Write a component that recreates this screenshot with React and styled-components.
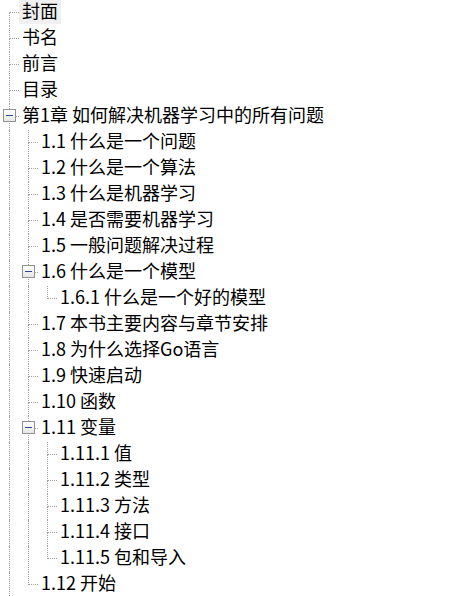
import React from "react";
import styled, { createGlobalStyle } from "styled-components";

const GlobalStyle = createGlobalStyle`
  html, body {
    margin: 0;
    padding: 0;
    background: #ffffff;
    overflow: hidden;
  }
  body {
    font-family: "Noto Sans CJK SC", "Microsoft YaHei", sans-serif;
    color: #000000;
  }
`;

const LINE = "#a0a0a0";

const Tree = styled.ul`
  list-style: none;
  margin: 0;
  padding: 0;
  height: 100vh;
  overflow: hidden;
`;

const Row = styled.li`
  display: flex;
  align-items: flex-start;
  height: 26px;
`;

const Guide = styled.span`
  flex: none;
  box-sizing: border-box;
  width: 10px;
  height: 100%;
  margin-left: 9px;
  border-left: 1px dotted ${(p) => (p.$on ? LINE : "transparent")};
`;

const Connector = styled.span`
  position: relative;
  flex: none;
  display: flex;
  flex-direction: column;
  width: 19px;
  height: 100%;
`;

const UpperHalf = styled.span`
  box-sizing: border-box;
  width: 10px;
  height: 13px;
  margin-left: 9px;
  border-left: 1px dotted ${(p) => (p.$on ? LINE : "transparent")};
  border-bottom: 1px dotted ${LINE};
`;

const LowerHalf = styled.span`
  flex: 1;
  box-sizing: border-box;
  width: 10px;
  margin-left: 9px;
  border-left: 1px dotted ${(p) => (p.$on ? LINE : "transparent")};
`;

const Toggle = styled.span`
  position: absolute;
  left: 3px;
  top: 5px;
  box-sizing: border-box;
  width: 13px;
  height: 13px;
  border: 1px solid #919191;
  background: linear-gradient(#ffffff, #e6e6e6);

  &::before {
    content: "";
    position: absolute;
    left: 2px;
    top: 5px;
    width: 7px;
    height: 1px;
    background: #2b4a9a;
  }

  &::after {
    content: "";
    display: ${(p) => (p.$open ? "none" : "block")};
    position: absolute;
    left: 5px;
    top: 2px;
    width: 1px;
    height: 7px;
    background: #2b4a9a;
  }
`;

const Label = styled.span`
  display: flex;
  align-items: center;
  box-sizing: border-box;
  height: 24px;
  padding: 0 3px 4px;
  font-size: 18px;
  line-height: 1;
  white-space: nowrap;
  background: ${(p) => (p.$selected ? "#f0f0f0" : "transparent")};
`;

// the book goes on past the window: chapter 1 is not the last root item
const toc = [
  { text: "封面", selected: true },
  { text: "书名" },
  { text: "前言" },
  { text: "目录" },
  {
    text: "第1章 如何解决机器学习中的所有问题",
    open: true,
    more: true,
    children: [
      { text: "1.1 什么是一个问题" },
      { text: "1.2 什么是一个算法" },
      { text: "1.3 什么是机器学习" },
      { text: "1.4 是否需要机器学习" },
      { text: "1.5 一般问题解决过程" },
      {
        text: "1.6 什么是一个模型",
        open: true,
        children: [{ text: "1.6.1 什么是一个好的模型" }],
      },
      { text: "1.7 本书主要内容与章节安排" },
      { text: "1.8 为什么选择Go语言" },
      { text: "1.9 快速启动" },
      { text: "1.10 函数" },
      {
        text: "1.11 变量",
        open: true,
        children: [
          { text: "1.11.1 值" },
          { text: "1.11.2 类型" },
          { text: "1.11.3 方法" },
          { text: "1.11.4 接口" },
          { text: "1.11.5 包和导入" },
        ],
      },
      { text: "1.12 开始" },
    ],
  },
];

function flatten(nodes, guides = [], isRoot = true) {
  const rows = [];
  nodes.forEach((node, i) => {
    const last = i === nodes.length - 1 && !node.more;
    rows.push({
      ...node,
      guides,
      upper: !(isRoot && i === 0),
      lower: !last,
    });
    if (node.open && node.children) {
      rows.push(...flatten(node.children, [...guides, !last], false));
    }
  });
  return rows;
}

function TreeRow({ row }) {
  return (
    <Row>
      {row.guides.map((on, i) => (
        <Guide key={i} $on={on} />
      ))}
      <Connector>
        <UpperHalf $on={row.upper} />
        <LowerHalf $on={row.lower} />
        {row.children && <Toggle $open={row.open} />}
      </Connector>
      <Label $selected={row.selected}>{row.text}</Label>
    </Row>
  );
}

export default function App() {
  const rows = flatten(toc);
  return (
    <>
      <GlobalStyle />
      <Tree>
        {rows.map((row, i) => (
          <TreeRow key={i} row={row} />
        ))}
      </Tree>
    </>
  );
}
